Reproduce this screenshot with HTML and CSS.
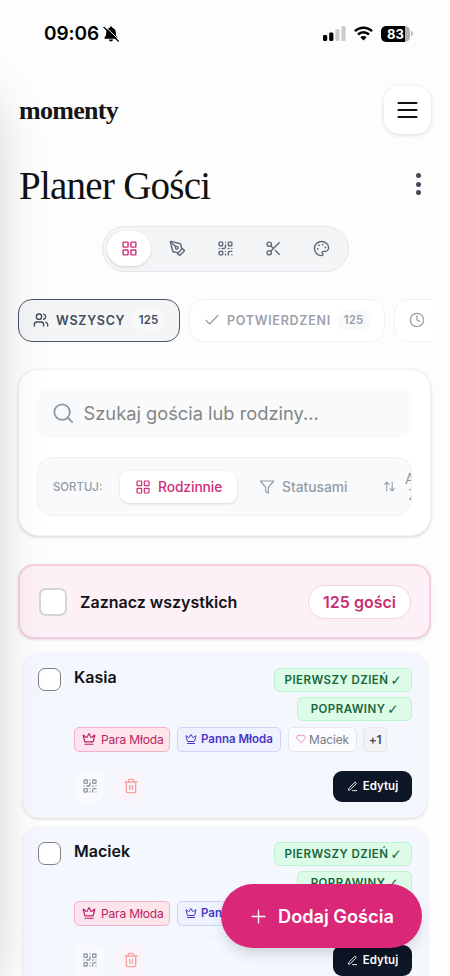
FILE: index.html
```html
<!DOCTYPE html>
<html lang="pl">
<head>
<meta charset="utf-8">
<title>Planer Gości</title>
<link rel="stylesheet" href="styles.css">
</head>
<body>
<svg class="sprite" aria-hidden="true">
  <symbol id="grid" viewBox="0 0 24 24"><rect x="3" y="3" width="7" height="7" rx="1"/><rect x="14" y="3" width="7" height="7" rx="1"/><rect x="14" y="14" width="7" height="7" rx="1"/><rect x="3" y="14" width="7" height="7" rx="1"/></symbol>
  <symbol id="pen" viewBox="0 0 24 24"><path d="M15.707 21.293a1 1 0 0 1-1.414 0l-1.586-1.586a1 1 0 0 1 0-1.414l5.586-5.586a1 1 0 0 1 1.414 0l1.586 1.586a1 1 0 0 1 0 1.414z"/><path d="m18 13-1.375-6.874a1 1 0 0 0-.746-.776L3.235 2.028a1 1 0 0 0-1.207 1.207L5.35 15.879a1 1 0 0 0 .776.746L13 18"/><path d="m2.3 2.3 7.286 7.286"/><circle cx="11" cy="11" r="2"/></symbol>
  <symbol id="qr" viewBox="0 0 24 24"><rect width="5" height="5" x="3" y="3" rx="1"/><rect width="5" height="5" x="16" y="3" rx="1"/><rect width="5" height="5" x="3" y="16" rx="1"/><path d="M21 16h-3a2 2 0 0 0-2 2v3M21 21v.01M12 7v3a2 2 0 0 1-2 2H7M3 12h.01M12 3h.01M12 16v.01M16 12h1M21 12v.01M12 21v-1"/></symbol>
  <symbol id="scissors" viewBox="0 0 24 24"><circle cx="6" cy="6" r="3"/><path d="M8.12 8.12 12 12M20 4 8.12 15.88"/><circle cx="6" cy="18" r="3"/><path d="M14.8 14.8 20 20"/></symbol>
  <symbol id="palette" viewBox="0 0 24 24"><path d="M12 22a1 1 0 0 1 0-20 10 9 0 0 1 10 9 5 5 0 0 1-5 5h-2.25a1.75 1.75 0 0 0-1.4 2.8l.3.4a1.75 1.75 0 0 1-1.4 2.8z"/><path d="M13.5 6.5h.01M17.5 10.5h.01M6.500 12.500h.01M8.500 7.500h.01" stroke-width="2.6"/></symbol>
  <symbol id="users" viewBox="0 0 24 24"><path d="M16 21v-2a4 4 0 0 0-4-4H6a4 4 0 0 0-4 4v2"/><circle cx="9" cy="7" r="4"/><path d="M22 21v-2a4 4 0 0 0-3-3.870M16 3.130a4 4 0 0 1 0 7.750"/></symbol>
  <symbol id="check" viewBox="0 0 24 24"><path d="M21 5 8.500 18 3 12.500"/></symbol>
  <symbol id="clock" viewBox="0 0 24 24"><circle cx="12" cy="12" r="10"/><path d="M12 6v6l4 2"/></symbol>
  <symbol id="search" viewBox="0 0 24 24"><circle cx="11" cy="11" r="8.500"/><path d="m22 22-4.800-4.800"/></symbol>
  <symbol id="filter" viewBox="0 0 24 24"><path d="M22 3H2l8 9.460V19l4 2v-8.540z"/></symbol>
  <symbol id="sort" viewBox="0 0 24 24"><path d="m21 16-4 4-4-4M17 20V4M3 8l4-4 4 4M7 4v16"/></symbol>
  <symbol id="crown" viewBox="0 0 24 24"><path d="M11.562 3.266a.5.5 0 0 1 .876 0L15.390 8.870a1 1 0 0 0 1.516.294L21.183 5.500a.5.5 0 0 1 .798.519l-2.834 10.246a1 1 0 0 1-.956.734H5.810a1 1 0 0 1-.957-.734L2.020 6.020a.5.5 0 0 1 .798-.519l4.276 3.664a1 1 0 0 0 1.516-.294zM5 21h14"/></symbol>
  <symbol id="heart" viewBox="0 0 24 24"><path d="M19 14c1.490-1.460 3-3.210 3-5.500A5.500 5.500 0 0 0 16.500 3c-1.760 0-3 .5-4.500 2-1.500-1.500-2.740-2-4.500-2A5.500 5.500 0 0 0 2 8.500c0 2.300 1.500 4.050 3 5.500l7 7z"/></symbol>
  <symbol id="trash" viewBox="0 0 24 24"><path d="M3 6h18M19 6v14a2 2 0 0 1-2 2H7a2 2 0 0 1-2-2V6M8 6V4a2 2 0 0 1 2-2h4a2 2 0 0 1 2 2v2M10 11v6M14 11v6"/></symbol>
  <symbol id="edit" viewBox="0 0 24 24"><path d="M12 21h9M16.376 3.622a1 1 0 0 1 3.002 3.002L7.368 18.635a2 2 0 0 1-.855.506l-2.872.838a.5.5 0 0 1-.620-.620l.838-2.872a2 2 0 0 1 .506-.854z"/></symbol>
  <symbol id="plus" viewBox="0 0 24 24"><path d="M3 12h18M12 3v18"/></symbol>
  <symbol id="menu" viewBox="0 0 24 24"><path d="M3 5h18M3 12h18M3 19h18"/></symbol>
</svg>

<div class="statusbar">
  <span class="time">09:06</span>
  <svg class="bell" viewBox="0 0 16 16"><path fill="#000" d="M8 .6c.8 0 1.300.5 1.300 1.200 2.100.7 3.500 2.400 3.500 4.700 0 2.900.6 3.900 1.600 4.900.5.5.3 1.300-.5 1.300H2.100c-.8 0-1-.8-.5-1.300 1-1 1.600-2 1.600-4.900 0-2.300 1.400-4 3.500-4.700C6.700 1.100 7.200.6 8 .6zM5.900 13.500h4.200c-.3 1.200-1 1.900-2.100 1.900s-1.800-.7-2.100-1.900z"/><path d="M1.900 .4 16 13.700" stroke="#fdfdfd" stroke-width="1"/><path d="M.8 1.300 15.500 15.200" stroke="#000" stroke-width="1.200" stroke-linecap="round"/></svg>
  <svg class="signal" viewBox="0 0 23 15"><rect x="0" y="9" width="4.200" height="6" rx="1.300"/><rect x="6.200" y="6.500" width="4.200" height="8.500" rx="1.300"/><rect x="12.300" y="3.300" width="4.200" height="11.700" rx="1.300" fill="#ccc"/><rect x="18.400" y="0" width="4.200" height="15" rx="1.300" fill="#ccc"/></svg>
  <svg class="wifi" viewBox="0 0 19 15"><g fill="none" stroke="#000" stroke-width="2.500"><path d="M.9 5.100a12.400 12.400 0 0 1 17.200 0"/><path d="M4 8.500a8 8 0 0 1 11 0"/></g><path d="M9.500 14.400 6.300 11.200a4.600 4.600 0 0 1 6.400 0z"/></svg>
  <span class="battery">83</span><i class="nub"></i>
</div>

<header class="brandrow">
  <span class="brand">momenty</span>
  <button class="menu"><svg class="i"><use href="#menu"/></svg></button>
</header>
<div class="titlerow">
  <h1>Planer Gości</h1>
  <span class="dots"><i></i><i></i><i></i></span>
</div>
<nav class="modes">
  <span class="mode on"><svg class="i"><use href="#grid"/></svg></span>
  <span class="mode"><svg class="i"><use href="#pen"/></svg></span>
  <span class="mode"><svg class="i"><use href="#qr"/></svg></span>
  <span class="mode"><svg class="i"><use href="#scissors"/></svg></span>
  <span class="mode"><svg class="i"><use href="#palette"/></svg></span>
</nav>
<div class="tabs">
  <div class="tab on"><svg class="i"><use href="#users"/></svg><b>WSZYSCY</b><em>125</em></div>
  <div class="tab second"><svg class="i"><use href="#check"/></svg><b>POTWIERDZENI</b><em>125</em></div>
  <div class="tab third"><svg class="i"><use href="#clock"/></svg></div>
</div>

<section class="panel">
  <div class="search"><svg class="i"><use href="#search"/></svg><span>Szukaj gościa lub rodziny...</span></div>
  <div class="sort">
    <span class="label">SORTUJ:</span>
    <span class="opt on"><svg class="i"><use href="#grid"/></svg>Rodzinnie</span>
    <span class="opt status"><svg class="i"><use href="#filter"/></svg>Statusami</span>
    <svg class="i sorticon"><use href="#sort"/></svg>
    <span class="az">A-<br>Z</span>
  </div>
</section>

<section class="all">
  <i class="box"></i><b>Zaznacz wszystkich</b><span class="count">125 gości</span>
</section>

<article class="guest">
  <div class="top">
    <i class="cb"></i><h2>Kasia</h2>
    <div class="days"><span class="day first">PIERWSZY DZIEŃ<u>✓</u></span><span class="day">POPRAWINY<u>✓</u></span></div>
  </div>
  <div class="chips">
    <span class="chip para"><svg class="i"><use href="#crown"/></svg>Para Młoda</span>
    <span class="chip panna"><svg class="i"><use href="#crown"/></svg>Panna Młoda</span>
    <span class="chip partner"><svg class="i"><use href="#heart"/></svg>Maciek</span>
    <span class="chip more">+1</span>
  </div>
  <div class="actions">
    <span class="act"><svg class="i"><use href="#qr"/></svg></span>
    <span class="act del"><svg class="i"><use href="#trash"/></svg></span>
    <button class="edit"><svg class="i"><use href="#edit"/></svg>Edytuj</button>
  </div>
</article>

<article class="guest">
  <div class="top">
    <i class="cb"></i><h2>Maciek</h2>
    <div class="days"><span class="day first">PIERWSZY DZIEŃ<u>✓</u></span><span class="day">POPRAWINY<u>✓</u></span></div>
  </div>
  <div class="chips">
    <span class="chip para"><svg class="i"><use href="#crown"/></svg>Para Młoda</span>
    <span class="chip panna"><svg class="i"><use href="#crown"/></svg>Panna Młoda</span>
  </div>
  <div class="actions">
    <span class="act"><svg class="i"><use href="#qr"/></svg></span>
    <span class="act del"><svg class="i"><use href="#trash"/></svg></span>
    <button class="edit"><svg class="i"><use href="#edit"/></svg>Edytuj</button>
  </div>
</article>

<div class="edge"></div>
<button class="fab"><svg class="i"><use href="#plus"/></svg>Dodaj Gościa</button>
</body>
</html>
```
FILE: styles.css
```css
* { box-sizing: border-box; }
html { height: 976px; overflow: hidden; }
body {
  margin: 0;
  width: 450px;
  height: 976px;
  overflow: hidden;
  position: relative;
  background: #fdfdfd;
  color: #111318;
  font-family: Inter, "Liberation Sans", sans-serif;
}
i, em { font-style: normal; }
u { text-decoration: none; }
button { border: 0; padding: 0; font-family: inherit; }
.sprite { position: absolute; width: 0; height: 0; }
.i {
  display: block;
  flex: none;
  fill: none;
  stroke: currentColor;
  stroke-width: 2;
  stroke-linecap: round;
  stroke-linejoin: round;
}

.statusbar { display: flex; align-items: center; height: 67px; padding-left: 44px; }
.time { width: 59px; font-size: 19px; font-weight: 600; letter-spacing: -0.1px; color: #000; white-space: nowrap; }
.bell { width: 16px; height: 16px; }
.signal { width: 23px; height: 15px; margin-left: 204px; }
.wifi { width: 19px; height: 15px; margin-left: 8px; }
.battery {
  width: 29px;
  height: 16px;
  margin-left: 8px;
  border-radius: 5px;
  background: linear-gradient(90deg, #000 24px, #b3b3b3 24px);
  color: #fff;
  font-size: 13px;
  font-weight: 700;
  line-height: 16px;
  text-align: center;
}
.nub { width: 2px; height: 5px; margin-left: 1px; border-radius: 0 2px 2px 0; background: #bbb; }

.brandrow { display: flex; align-items: center; justify-content: space-between; height: 48px; margin: 19px 19px 0 19px; }
.brand { padding-top: 2px; font-family: "Liberation Serif", serif; font-size: 26px; font-weight: 700; letter-spacing: -0.7px; line-height: 46px; color: #161616; }
.menu {
  display: grid;
  place-items: center;
  width: 47px;
  height: 48px;
  border-radius: 15px;
  background: #fff;
  box-shadow: 0 1px 4px rgba(0, 0, 0, .14);
  color: #111;
}
.menu .i { width: 27px; height: 24px; stroke-width: 2.1; }

.titlerow { display: flex; align-items: center; justify-content: space-between; height: 60px; margin: 20px 29px 0 19px; }
h1 { margin: 3px 0 0; font-family: "Liberation Serif", serif; font-size: 39px; font-weight: 400; letter-spacing: -.75px; line-height: 60px; color: #111; white-space: nowrap; }
.dots { display: flex; flex-direction: column; gap: 3.200px; padding-right: .5px; }
.dots i { width: 5px; height: 5px; border-radius: 50%; background: #414b5b; }

.modes {
  display: flex;
  gap: 4px;
  width: 247px;
  height: 46px;
  margin: 12px 0 0 102px;
  padding: 4px;
  border: 1px solid #e2e6ea;
  border-radius: 23px;
  background: #f3f5f7;
  color: #626a78;
}
.mode { display: grid; place-items: center; width: 44px; height: 35px; border-radius: 18px; }
.mode .i { width: 17px; height: 17px; }
.mode.on { background: #fff; color: #cf2f77; box-shadow: 0 1px 3px rgba(0, 0, 0, .14); }

.tabs { display: flex; gap: 9px; height: 43px; margin: 27px 18px 0; overflow: hidden; }
.tab {
  display: flex;
  flex: none;
  align-items: center;
  width: 162px;
  height: 42.500px;
  padding-left: 14px;
  border: 1px solid #f0f1f4;
  border-radius: 14px;
  background: #fff;
  color: #9ca1ac;
}
.tab .i { width: 16px; height: 16px; }
.tab b { margin-left: 7px; font-size: 12.500px; font-weight: 600; letter-spacing: .72px; }
.tab em {
  width: 33px;
  margin-left: auto;
  margin-right: 14px;
  border-radius: 10px;
  background: #f8f9fb;
  font-size: 11.500px;
  font-weight: 600;
  line-height: 20px;
  text-align: center;
}
.tab.on { border: 1.500px solid #4b5468; background: #f3f5f7; color: #434c5c; }
.tab.on em { background: #f8f9fa; }
.tab.second { width: 196px; }
.tab.third { width: 150px; }

.panel {
  display: flex;
  flex-direction: column;
  gap: 19px;
  width: 413px;
  height: 167px;
  margin: 27px 0 0 18px;
  padding: 18px;
  border: 1px solid #f1f2f3;
  border-radius: 20px;
  background: #fff;
  box-shadow: 0 1px 3px rgba(0, 0, 0, .16);
}
.search { display: flex; flex: none; align-items: center; height: 50px; padding-left: 15px; border-radius: 15px; background: #f8fafb; font-size: 18.300px; color: #858585; }
.search .i { width: 22px; height: 22px; color: #9299a5; }
.search span { margin-left: 9.500px; white-space: nowrap; }
.sort { display: flex; flex: none; align-items: center; height: 59px; padding-left: 15px; overflow: hidden; border: 1px solid #f0f2f4; border-radius: 15px; background: #f8fafb; color: #949aa6; }
.label { flex: none; width: 67px; font-size: 11.400px; font-weight: 500; white-space: nowrap; }
.opt { display: flex; flex: none; align-items: center; gap: 7px; height: 32px; font-size: 13.800px; font-weight: 500; letter-spacing: -.08px; }
.opt .i { width: 16px; height: 16px; stroke-width: 1.800; }
.opt.on { width: 117px; padding-left: 15px; border-radius: 9px; background: #fff; color: #cf2f77; box-shadow: 0 1px 3px rgba(0, 0, 0, .14); }
.opt.status { margin-left: 22px; width: 88px; letter-spacing: 0; }
.sorticon { width: 13px; height: 13px; margin-left: 36px; }
.az { flex: none; margin-left: 9px; font-size: 14px; line-height: 16px; text-align: center; white-space: nowrap; }

.all {
  display: flex;
  align-items: center;
  width: 413px;
  height: 75px;
  margin: 28px 0 0 18px;
  padding: 0 18px 0 19px;
  border: 2px solid #f5cfe2;
  border-radius: 16px;
  background: #fdf1f7;
  box-shadow: 0 1px 3px rgba(0, 0, 0, .13);
}
.box { width: 28px; height: 28px; border: 2px solid #d4d6da; border-radius: 7px; background: #fff; }
.all b { margin-left: 13px; font-size: 16px; font-weight: 600; white-space: nowrap; }
.count {
  width: 103px;
  height: 34px;
  margin-left: auto;
  border: 1px solid #f6d3e4;
  border-radius: 17px;
  background: #fff;
  color: #c62f74;
  font-size: 16px;
  font-weight: 600;
  line-height: 33px;
  text-align: center;
}

.guest {
  width: 404px;
  height: 165px;
  margin: 14px 0 0 23px;
  padding: 15px;
  border-radius: 16px;
  background: #f4f7fe;
  box-shadow: 0 1px 3px rgba(0, 0, 0, .15);
}
.guest + .guest { margin-top: 9px; }
.top { display: flex; height: 53px; }
.cb { width: 23px; height: 23px; border: 1.500px solid #7e8086; border-radius: 7px; background: #fff; }
h2 { margin: 0 0 0 13px; font-size: 16px; font-weight: 600; line-height: 19px; }
.days { display: flex; flex-direction: column; align-items: flex-end; gap: 5px; margin-left: auto; }
.day {
  display: flex;
  align-items: center;
  justify-content: center;
  gap: 2px;
  width: 115px;
  height: 24px;
  border: 1px solid #bbf3cd;
  border-radius: 6px;
  background: #dcfce7;
  color: #17663a;
  font-size: 11.500px;
  font-weight: 600;
  letter-spacing: .45px;
  white-space: nowrap;
}
.day.first { width: 138px; }
.day u { width: 11px; font-family: "DejaVu Sans", sans-serif; font-size: 13.500px; font-weight: 700; letter-spacing: 0; line-height: 14px; }
.chips { display: flex; gap: 7px; margin: 6px 0 0 36px; }
.chip { display: flex; flex: none; align-items: center; height: 24.500px; padding: 0 7px; border: 1px solid; border-radius: 5px; font-size: 12px; white-space: nowrap; }
.chip.para { width: 96px; border-color: #f5afcf; background: linear-gradient(90deg, #fce4f0, #ffe5e7); color: #b92365; letter-spacing: -.15px; }
.chip.para .i { width: 14px; height: 14px; margin-right: 5px; }
.chip.panna { width: 104px; border-color: #ccd4fb; background: #eef2ff; color: #4a37c6; font-size: 11.500px; font-weight: 600; }
.chip.panna .i { width: 12px; height: 12px; margin-right: 4px; }
.chip.partner { width: 69px; border-color: #e5e7eb; background: #fbfcfe; color: #777d88; letter-spacing: -.15px; }
.chip.partner .i { width: 10px; height: 10px; margin-right: 3px; color: #ea75b1; }
.chip.more { width: 24px; margin-left: -1px; padding: 0; justify-content: center; border-color: #e4e6e9; background: #f1f3f5; color: #444b57; font-size: 12px; font-weight: 600; letter-spacing: -.3px; }
.actions { display: flex; gap: 11px; height: 41px; margin: 10px 0 0 15px; padding: 8px 0 0 22px; border-top: 1px solid #eff2f8; }
.act { display: grid; place-items: center; width: 30px; height: 31px; border-radius: 8px; background: #f8fafd; color: #9098a5; }
.act .i { width: 16px; height: 16px; }
.act.del { background: #f9f4fa; color: #f8a09e; }
.edit {
  display: flex;
  align-items: center;
  justify-content: center;
  gap: 5px;
  width: 79px;
  height: 31px;
  margin-left: auto;
  border-radius: 9px;
  background: #0d1627;
  color: #fff;
  font-size: 11.500px;
  font-weight: 600;
}
.edit .i { width: 11px; height: 11px; }

/* shadow cast by the off-canvas drawer */
.edge { position: absolute; left: -200px; top: 68px; width: 200px; height: 900px; box-shadow: 0 25px 50px -12px rgba(0, 0, 0, .25); pointer-events: none; }
.fab {
  position: absolute;
  left: 221px;
  top: 884px;
  display: flex;
  align-items: center;
  width: 201px;
  height: 64px;
  padding-left: 29px;
  border-radius: 32px;
  background: #db2777;
  box-shadow: 0 8px 14px -3px rgba(0, 0, 0, .16);
  color: #fff;
  font-size: 18.200px;
  font-weight: 600;
  white-space: nowrap;
}
.fab .i { width: 17px; height: 17px; margin-right: 11px; stroke-width: 1.900; }
```
